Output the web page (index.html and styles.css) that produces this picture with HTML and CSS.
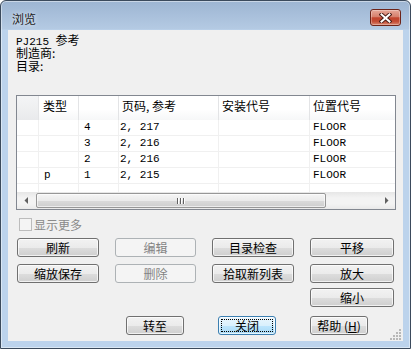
FILE: index.html
```html
<!DOCTYPE html>
<html lang="zh-CN">
<head>
    <meta charset="UTF-8">
    <title>浏览</title>
    <link rel="stylesheet" href="styles.css">
</head>
<body>
    <div class="window">
        <div class="titlebar">
            <span class="title">浏览</span>
            <div class="close-btn">
                <svg width="13" height="10" viewBox="0 0 13 10">
                    <path d="M2.5 1.5 L10.5 8.5 M10.5 1.5 L2.5 8.5" stroke="#4a1d17" stroke-width="4" stroke-linecap="square" fill="none"/>
                    <path d="M2.5 1.5 L10.5 8.5 M10.5 1.5 L2.5 8.5" stroke="#fff" stroke-width="2" stroke-linecap="square" fill="none"/>
                </svg>
            </div>
        </div>

        <div class="client">
            <div class="info">
                <div class="info-line"><span class="mono">PJ215&nbsp;</span>参考</div>
                <div class="info-line">制造商:</div>
                <div class="info-line">目录:</div>
            </div>

            <div class="list">
                <div class="list-head">
                    <div class="cell first"></div>
                    <div class="cell">类型</div>
                    <div class="cell"></div>
                    <div class="cell">页码, 参考</div>
                    <div class="cell">安装代号</div>
                    <div class="cell">位置代号</div>
                </div>
                <div class="row">
                    <div class="cell"></div>
                    <div class="cell"></div>
                    <div class="cell num">4</div>
                    <div class="cell page">2, 217</div>
                    <div class="cell"></div>
                    <div class="cell loc">FLOOR</div>
                </div>
                <div class="row">
                    <div class="cell"></div>
                    <div class="cell"></div>
                    <div class="cell num">3</div>
                    <div class="cell page">2, 216</div>
                    <div class="cell"></div>
                    <div class="cell loc">FLOOR</div>
                </div>
                <div class="row">
                    <div class="cell"></div>
                    <div class="cell"></div>
                    <div class="cell num">2</div>
                    <div class="cell page">2, 216</div>
                    <div class="cell"></div>
                    <div class="cell loc">FLOOR</div>
                </div>
                <div class="row">
                    <div class="cell"></div>
                    <div class="cell type">p</div>
                    <div class="cell num">1</div>
                    <div class="cell page">2, 215</div>
                    <div class="cell"></div>
                    <div class="cell loc">FLOOR</div>
                </div>
                <div class="row partial">
                    <div class="cell"></div>
                    <div class="cell"></div>
                    <div class="cell"></div>
                    <div class="cell"></div>
                    <div class="cell"></div>
                    <div class="cell"></div>
                </div>
                <div class="hscroll">
                    <div class="arrow">
                        <svg width="4" height="7" viewBox="0 0 4 7"><path d="M4 0 L4 7 L0.5 3.5 Z" fill="#606060"/></svg>
                    </div>
                    <div class="track">
                        <div class="thumb">
                            <span class="grip-line"></span>
                            <span class="grip-line"></span>
                            <span class="grip-line"></span>
                        </div>
                    </div>
                    <div class="arrow">
                        <svg width="4" height="7" viewBox="0 0 4 7"><path d="M0 0 L0 7 L3.5 3.5 Z" fill="#606060"/></svg>
                    </div>
                </div>
            </div>

            <div class="more">
                <span class="checkbox"></span>
                <span>显示更多</span>
            </div>

            <div class="btn-grid">
                <button class="btn">刷新</button>
                <button class="btn" disabled>编辑</button>
                <button class="btn">目录检查</button>
                <button class="btn">平移</button>
                <button class="btn">缩放保存</button>
                <button class="btn" disabled>删除</button>
                <button class="btn">拾取新列表</button>
                <button class="btn">放大</button>
                <button class="btn zoom-out">缩小</button>
            </div>

            <div class="btn-bottom">
                <button class="btn">转至</button>
                <button class="btn default">关闭</button>
                <button class="btn">帮助 (<u>H</u>)</button>
            </div>

            <svg class="size-grip" width="12" height="12" viewBox="0 0 12 12">
                <g fill="#b8b8b8">
                    <rect x="9" y="1" width="2" height="2"/>
                    <rect x="6" y="4" width="2" height="2"/>
                    <rect x="9" y="4" width="2" height="2"/>
                    <rect x="3" y="7" width="2" height="2"/>
                    <rect x="6" y="7" width="2" height="2"/>
                    <rect x="9" y="7" width="2" height="2"/>
                    <rect x="0" y="10" width="2" height="2"/>
                    <rect x="3" y="10" width="2" height="2"/>
                    <rect x="6" y="10" width="2" height="2"/>
                    <rect x="9" y="10" width="2" height="2"/>
                </g>
            </svg>
        </div>
    </div>
</body>
</html>
```

FILE: styles.css
```css
* {
  box-sizing: border-box;
}
body {
  margin: 0;
  background: #fff;
  font-family: "Noto Sans CJK SC", sans-serif;
  font-size: 12px;
  color: #000;
}

/* window frame */
.window {
  width: 411px;
  height: 349px;
  border: 1px solid #3b4a5c;
  border-radius: 6px 6px 0 0;
  background: linear-gradient(#9db5d2 0px, #b4cae3 28px, #bcd3ec 29px, #bcd3ec 100%);
  box-shadow: inset 0 0 0 1px rgba(255, 255, 255, 0.45);
  display: flex;
  flex-direction: column;
  overflow: hidden;
}
.titlebar {
  height: 29px;
  display: flex;
  justify-content: space-between;
  align-items: flex-start;
  padding: 0 9px 0 11px;
}
.title {
  margin-top: 11px;
  line-height: 14px;
  color: #1b1b1b;
  text-shadow: 0 0 5px rgba(255, 255, 255, 0.9);
}
.close-btn {
  width: 31px;
  height: 17px;
  margin-top: 8px;
  border: 1px solid #6d2419;
  border-radius: 3px;
  background: linear-gradient(#e7a899 0%, #d6806d 45%, #c2442d 52%, #c24a33 75%, #d9856f 100%);
  box-shadow: inset 0 0 0 1px rgba(255, 255, 255, 0.3);
  display: flex;
  justify-content: center;
  align-items: center;
}

/* client area */
.client {
  flex: 1;
  margin: 0 7px 7px;
  padding-left: 8px;
  background: #f0f0f0;
  position: relative;
}
.info {
  height: 65px;
  padding-top: 3px;
}
.info-line {
  height: 13px;
  line-height: 13px;
}
.mono {
  font-family: "Liberation Mono", monospace;
  font-size: 11px;
}

/* list view */
.list {
  width: 380px;
  height: 115px;
  border: 1px solid #828790;
  background: #fff;
  display: flex;
  flex-direction: column;
}
.list-head,
.row {
  display: grid;
  grid-template-columns: 22px 40px 40px 100px 91px 85px;
}
.list-head {
  height: 24px;
  background: linear-gradient(#ffffff, #ffffff 55%, #f6f7f8);
}
.list-head .cell {
  border-right: 1px solid #e3e4e6;
  line-height: 20px;
  padding-left: 4px;
}
.list-head .cell:nth-child(4),
.list-head .cell:nth-child(5),
.list-head .cell:nth-child(6) {
  padding-left: 3px;
}
.list-head .cell:last-child {
  border-right: none;
}
.list-head .first {
  background: linear-gradient(#f4f5f6, #e9eaec);
}
.row {
  height: 16px;
  border-bottom: 1px solid #f0f0f0;
}
.row .cell {
  border-right: 1px solid #f0f0f0;
  font-family: "Liberation Mono", monospace;
  font-size: 11px;
  line-height: 15px;
  white-space: nowrap;
}
.row .cell:last-child {
  border-right: none;
}
.row.partial {
  height: 8px;
  border-bottom: none;
}
.cell.type,
.cell.num {
  padding-left: 5px;
}
.cell.page {
  padding-left: 1px;
}
.cell.loc {
  padding-left: 3px;
}

/* horizontal scrollbar */
.hscroll {
  height: 17px;
  display: flex;
  background: linear-gradient(#e6e6e6, #f3f3f3 35%, #f3f3f3 70%, #e9e9e9);
}
.arrow {
  width: 17px;
  display: flex;
  justify-content: center;
  align-items: center;
}
.track {
  flex: 1;
  padding: 1px 0 1px 2px;
}
.thumb {
  width: 290px;
  height: 15px;
  border: 1px solid #979797;
  border-radius: 2px;
  background: linear-gradient(#f5f5f5, #ebebeb 50%, #dbdbdb 51%, #cecece);
  box-shadow: inset 0 0 0 1px rgba(255, 255, 255, 0.6);
  display: flex;
  justify-content: center;
  align-items: center;
  gap: 1px;
}
.grip-line {
  width: 1px;
  height: 6px;
  background: #606060;
  box-shadow: 1px 0 0 #fff;
  margin-right: 1px;
}

/* checkbox */
.more {
  height: 28px;
  padding: 8px 0 0 3px;
  display: flex;
  align-items: flex-start;
  gap: 2px;
  color: #8a8a8a;
  line-height: 14px;
}
.checkbox {
  width: 13px;
  height: 13px;
  border: 1px solid #bcbcbc;
  background: #f4f4f4;
}

/* buttons */
.btn {
  height: 19px;
  padding: 0;
  font-family: "Noto Sans CJK SC", sans-serif;
  font-size: 12px;
  line-height: 17px;
  color: #000;
  border: 1px solid #707070;
  border-radius: 3px;
  background: linear-gradient(#f2f2f2 0%, #ebebeb 50%, #dddddd 51%, #cfcfcf 100%);
  box-shadow: inset 0 0 0 1px rgba(255, 255, 255, 0.7);
}
.btn u {
  text-decoration: underline;
}
.btn:disabled {
  border-color: #adb2b5;
  background: #f4f4f4;
  color: #838383;
  box-shadow: none;
}
.btn.default {
  border-color: #3c7fb1;
  background: linear-gradient(#eaf6fd 0%, #d9f0fc 50%, #bee6fd 51%, #a7d9f5 100%);
  outline: 1px dotted #000;
  outline-offset: -4px;
}
.btn-grid {
  display: grid;
  grid-template-columns: 82px 81px 82px 84px;
  grid-template-rows: 26px 24px 19px;
  column-gap: 16px;
  align-items: start;
  padding-left: 1px;
}
.zoom-out {
  grid-column: 4;
}
.btn-bottom {
  display: flex;
  gap: 34px;
  margin-top: 9px;
  padding-left: 110px;
}
.btn-bottom .btn {
  width: 58px;
}
.size-grip {
  position: absolute;
  right: 1px;
  bottom: 1px;
}
```
